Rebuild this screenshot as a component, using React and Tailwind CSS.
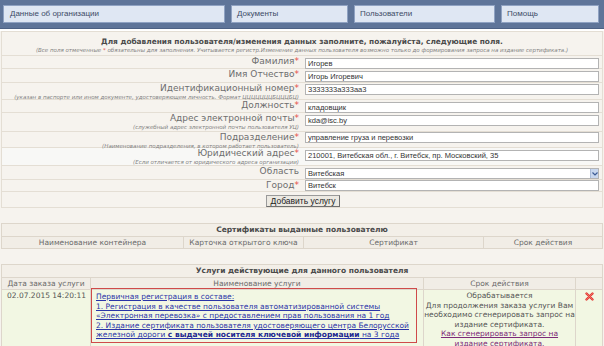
import React from 'react';

const Star = () => <span className="text-[#e5504a]">*</span>;

const rows = [
  { label: 'Фамилия', req: true, value: 'Игорев', h: 'h-[13px]', pt: 'pt-[2px]' },
  { label: 'Имя Отчество', req: true, value: 'Игорь Игоревич', h: 'h-[14px]', pt: 'pt-[2px]' },
  {
    label: 'Идентификационный номер',
    req: true,
    note: '(указан в паспорте или ином документе, удостоверяющем личность. Формат ЦЦЦЦЦЦЦБЦЦЦБЦ)',
    value: '3333333a333aa3',
    h: 'h-[17px]',
    pt: 'pt-[1px]',
  },
  { label: 'Должность', req: true, value: 'кладовщик', h: 'h-[13px]', pt: 'pt-[2px]' },
  {
    label: 'Адрес электронной почты',
    req: true,
    note: '(служебный адрес электронной почты пользователя УЦ)',
    value: 'kda@isc.by',
    h: 'h-[19px]',
    pt: 'pt-[2px]',
  },
  {
    label: 'Подразделение',
    req: true,
    note: '(Наименование подразделения, в котором работает пользователь)',
    value: 'управление груза и перевозки',
    h: 'h-[16px]',
    pt: 'pt-[0px]',
  },
  {
    label: 'Юридический адрес',
    req: true,
    note: '(Если отличается от юридического адреса организации)',
    value: '210001, Витебская обл., г. Витебск, пр. Московский, 35',
    h: 'h-[18px]',
    pt: 'pt-[2px]',
    light: true,
  },
  { label: 'Область', req: false, value: 'Витебская', h: 'h-[14px]', pt: 'pt-[2px]', select: true },
  { label: 'Город', req: true, value: 'Витебск', h: 'h-[12px]', pt: 'pt-[0px]' },
];

const FieldRow = ({ row }) => (
  <div className={`grid grid-cols-[301px_1fr] border-b border-[#e4ded4] ${row.h} ${row.light ? 'bg-[#f8f8f6]' : ''}`}>
    <div className="text-right pr-[4px] text-[#6e6e6e]">
      <div className="text-[9px] leading-[11px]">
        {row.label}
        {row.req && <Star />}
      </div>
      {row.note && <div className="text-[5.5px] leading-[6px] italic text-[#808080] whitespace-nowrap">{row.note}</div>}
    </div>
    <div className={`${row.pt} pr-[3px] pl-[2px]`}>
      <div className="h-[11px] border border-[#b3b3b3] bg-white flex items-center pl-[2px] font-['Liberation_Sans',Arial,sans-serif] text-[7.5px] text-[#333]">
        <span className="flex-1">{row.value}</span>
        {row.select && (
          <span className="w-[8px] h-[9px] bg-[#c8d7ee] border-l border-[#a9bbd8] flex items-center justify-center">
            <svg width="6" height="4" viewBox="0 0 6 4">
              <path d="M0.5 0.5 L3 3 L5.5 0.5" fill="none" stroke="#3b5b94" strokeWidth="1.2" />
            </svg>
          </span>
        )}
      </div>
    </div>
  </div>
);

export default function App() {
  return (
    <div className="w-[604px] h-[346px] overflow-hidden bg-[#f6f3ee] font-['DejaVu_Sans',sans-serif]">
      <div className="h-[29px] bg-[#5f7599] border-b border-[#4d6183] pt-[5px] pl-[3px] flex gap-[6px] font-['Liberation_Sans',Arial,sans-serif] text-[8px] text-[#3d4b66]">
        <div className="w-[222px] h-[18px] bg-[#dfe7f3] border border-[#8fa2c2] flex items-center pl-[6px]">Данные об организации</div>
        <div className="w-[117px] h-[18px] bg-[#dfe7f3] border border-[#8fa2c2] flex items-center pl-[5px]">Документы</div>
        <div className="w-[141px] h-[18px] bg-[#dfe7f3] border border-[#8fa2c2] flex items-center pl-[5px]">Пользователи</div>
        <div className="w-[98px] h-[18px] bg-[#dfe7f3] border border-[#8fa2c2] flex items-center pl-[5px]">Помощь</div>
      </div>
      <div className="h-[2px] bg-white" />

      <div className="mx-[1px] border-t border-x border-[#e4ded4]">
        <div className="h-[24px] border-b border-[#e4ded4] flex flex-col items-center pt-[4px]">
          <div className="text-[7.4px] leading-[11px] font-bold text-[#4a4a4a] whitespace-nowrap">
            Для добавления пользователя/изменения данных заполните, пожалуйста, следующие поля.
          </div>
          <div className="text-[5.5px] leading-[7px] italic text-[#808080] whitespace-nowrap">
            (Все поля отмеченные <Star /> обязательны для заполнения. Учитывается регистр.Изменение данных пользователя возможно только до формирования запроса на издание сертификата.)
          </div>
        </div>
        {rows.map((r) => (
          <FieldRow key={r.label} row={r} />
        ))}
        <div className="h-[16px] border-b border-[#e4ded4] flex justify-center pt-[3px]">
          <button className="h-[12px] px-[4px] bg-[#ece9e2] border border-[#9a9a9a] border-b-[#6f6f6f] border-r-[#6f6f6f] font-['Liberation_Sans',Arial,sans-serif] text-[8.5px] leading-[10px] text-[#222] whitespace-nowrap ml-[2px]">
            Добавить услугу
          </button>
        </div>
      </div>

      <div className="mt-[15px] mx-[1px] border border-[#ddd6cb] text-[7.5px]">
        <div className="h-[12px] bg-[#f3efe8] flex items-center justify-center font-bold text-[#4a4a4a]">
          Сертификаты выданные пользователю
        </div>
        <div className="h-[12px] border-t border-[#ddd6cb] grid grid-cols-[181px_120px_180px_1fr] text-[#6a6a6a] bg-[#f1ede6]">
          <div className="flex items-center justify-center">Наименование контейнера</div>
          <div className="flex items-center justify-center border-l border-[#ddd6cb]">Карточка открытого ключа</div>
          <div className="flex items-center justify-center border-l border-[#ddd6cb]">Сертификат</div>
          <div className="flex items-center justify-center border-l border-[#ddd6cb]">Срок действия</div>
        </div>
      </div>

      <div className="mt-[15px] mx-[1px] border border-[#ddd6cb] text-[7.5px]">
        <div className="h-[12px] bg-[#f3efe8] flex items-center justify-center font-bold text-[#4a4a4a]">
          Услуги действующие для данного пользователя
        </div>
        <div className="h-[12px] border-t border-[#ddd6cb] grid grid-cols-[88px_333px_152px_1fr] text-[#6a6a6a] bg-[#f1ede6]">
          <div className="flex items-center justify-center">Дата заказа услуги</div>
          <div className="flex items-center justify-center border-l border-[#ddd6cb]">Наименование услуги</div>
          <div className="flex items-center justify-center border-l border-[#ddd6cb]">Срок действия</div>
          <div className="border-l border-[#ddd6cb]" />
        </div>
        <div className="h-[58px] border-t border-[#ddd6cb] grid grid-cols-[88px_333px_152px_1fr] bg-[#f2f7e3] leading-[9.6px]">
          <div className="pt-[1px] pl-[5px] text-[#555] whitespace-nowrap">02.07.2015 14:20:11</div>
          <div className="border-l border-[#ddd6cb]">
            <div className="-mt-[2px] h-[55px] w-[326px] border border-[#cf4a4a] pl-[4px] pt-[3px] text-[#2a34a8] underline whitespace-nowrap">
              <div>Первичная регистрация в составе:</div>
              <div>1. Регистрация в качестве пользователя автоматизированной системы</div>
              <div>«Электронная перевозка» с предоставлением прав пользования на 1 год</div>
              <div>2. Издание сертификата пользователя удостоверяющего центра Белорусской</div>
              <div>
                железной дороги <b className="text-[#1d2890]">с выдачей носителя ключевой информации</b> на 3 года
              </div>
            </div>
          </div>
          <div className="border-l border-[#ddd6cb] pt-[1px] text-center text-[#555] whitespace-nowrap">
            <div>Обрабатывается</div>
            <div>Для продолжения заказа услуги Вам</div>
            <div>необходимо сгенерировать запрос на</div>
            <div>издание сертификата.</div>
            <div className="text-[#7d2a78] underline">Как сгенерировать запрос на</div>
            <div className="text-[#7d2a78] underline">издание сертификата.</div>
          </div>
          <div className="border-l border-[#ddd6cb] flex justify-center pt-[2px]">
            <svg width="9" height="9" viewBox="0 0 9 9">
              <path d="M1.5 1.5 L7.5 7.5 M7.5 1.5 L1.5 7.5" stroke="#e23a34" strokeWidth="2.4" strokeLinecap="round" />
              <path d="M1.5 1.5 L7.5 7.5 M7.5 1.5 L1.5 7.5" stroke="#f47a70" strokeWidth="0.8" strokeLinecap="round" />
            </svg>
          </div>
        </div>
      </div>
    </div>
  );
}
